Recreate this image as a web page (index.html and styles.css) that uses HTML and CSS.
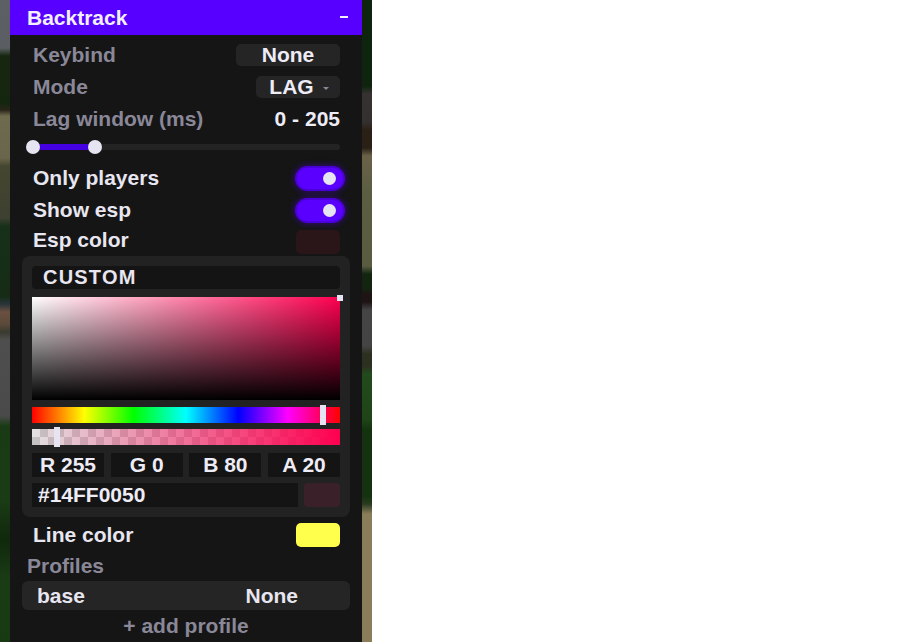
FILE: index.html
```html
<!DOCTYPE html>
<html lang="en">
<head>
  <meta charset="UTF-8" />
  <title>Backtrack</title>
  <link rel="stylesheet" href="styles.css">
</head>
<body>
  <div class="scene">
    <div class="module">
      <div class="module-head">
        <span class="module-title">Backtrack</span>
        <span class="collapse"></span>
      </div>

      <div class="module-body">
        <div class="row">
          <span class="label muted">Keybind</span>
          <span class="pill bind">None</span>
        </div>
        <div class="row">
          <span class="label muted">Mode</span>
          <span class="pill mode">LAG <span class="caret"></span></span>
        </div>
        <div class="row">
          <span class="label muted">Lag window (ms)</span>
          <span class="value">0 - 205</span>
        </div>
        <div class="slider-row">
          <div class="slider">
            <div class="slider-fill"></div>
            <span class="thumb thumb-min"></span>
            <span class="thumb thumb-max"></span>
          </div>
        </div>
        <div class="row">
          <span class="label">Only players</span>
          <span class="toggle on"><span class="knob"></span></span>
        </div>
        <div class="row">
          <span class="label">Show esp</span>
          <span class="toggle on"><span class="knob"></span></span>
        </div>
        <div class="row row-short">
          <span class="label">Esp color</span>
          <span class="swatch esp"></span>
        </div>

        <div class="picker">
          <div class="picker-mode">CUSTOM</div>
          <div class="sv-box"><span class="sv-dot"></span></div>
          <div class="hue-bar"><span class="bar-mark hue-mark"></span></div>
          <div class="alpha-bar"><span class="bar-mark alpha-mark"></span></div>
          <div class="channels">
            <span class="channel">R 255</span>
            <span class="channel">G 0</span>
            <span class="channel">B 80</span>
            <span class="channel">A 20</span>
          </div>
          <div class="hex-row">
            <span class="hex-input">#14FF0050</span>
            <span class="hex-preview"></span>
          </div>
        </div>

        <div class="row row-after">
          <span class="label">Line color</span>
          <span class="swatch line"></span>
        </div>

        <div class="section-title">Profiles</div>
        <div class="profile">
          <span class="profile-name">base</span>
          <span class="profile-bind">None</span>
        </div>
        <div class="add-profile">+ add profile</div>
      </div>
    </div>
  </div>
</body>
</html>
```

FILE: styles.css
```css
body {
  margin: 0;
  background: #fff;
  font-family: "Liberation Sans", Arial, sans-serif;
  font-weight: bold;
}

/* blurred game world behind the click gui */
.scene {
  width: 372px;
  height: 642px;
  overflow: hidden;
  background:
    linear-gradient(to bottom,
      #5c6064 0, #5a5e62 48px, #16260f 56px, #15260f 104px, #2a2418 110px,
      #6e6a4e 116px, #6a664c 158px, #45462f 166px, #3e4030 218px,
      #17301a 226px, #152b14 296px, #28343a 304px, #6a5040 312px,
      #5c4a3a 324px, #3a3a30 332px, #4e4e4e 340px, #4a4a4a 416px,
      #193a14 426px, #1a3c15 500px, #10280c 540px, #1a3c15 580px, #183a13 642px)
      left top / 10px 100% no-repeat,
    linear-gradient(to bottom,
      #0f240e 0, #0f240e 86px, #363232 94px, #343030 122px, #2a2016 130px,
      #2a2016 148px, #6a6248 156px, #5c5e44 190px, #5a5c42 266px,
      #12260f 274px, #12260f 288px, #1e1414 294px, #1e1414 302px,
      #454545 310px, #444 346px, #2c3020 354px, #2c3020 366px,
      #234a1c 374px, #1e4418 420px, #14320f 430px, #14320f 496px,
      #2a3a20 504px, #8a7e5a 514px, #8a7e5a 642px)
      right top / 10px 100% no-repeat;
}

.module {
  width: 352px;
  height: 642px;
  margin-left: 10px;
  background: #151515;
}

.module-head {
  height: 35px;
  background: #5800ff;
  display: flex;
  align-items: center;
  justify-content: space-between;
  padding: 0 14px 0 17px;
  color: #f2f0ff;
  font-size: 21px;
}

.collapse {
  width: 8px;
  height: 2px;
  background: #f2f0ff;
  margin-top: -2px;
}

.module-body {
  padding: 4px 12px 0;
}

.row {
  height: 32px;
  display: flex;
  align-items: center;
  justify-content: space-between;
  padding: 0 10px 0 11px;
}

.row-short {
  height: 30px;
  align-items: flex-start;
  padding-top: 4px;
  box-sizing: border-box;
}

.row-short .label {
  margin-top: -2px;
}

.row-after {
  margin-top: 2px;
}

.label {
  font-size: 21px;
  color: #e8e6f0;
}

.muted {
  color: #8a8898;
}

.value {
  font-size: 21px;
  color: #eeecf6;
}

.pill {
  height: 22px;
  border-radius: 5px;
  background: #252525;
  color: #eeecf6;
  font-size: 21px;
  display: flex;
  align-items: center;
  justify-content: center;
}

.bind {
  width: 104px;
}

.mode {
  width: 84px;
  gap: 9px;
  padding-left: 2px;
  box-sizing: border-box;
}

.caret {
  width: 0;
  height: 0;
  border-left: 3px solid transparent;
  border-right: 3px solid transparent;
  border-top: 3px solid #8a8898;
  margin-top: 2px;
}

.slider-row {
  height: 24px;
  margin-bottom: 3px;
  display: flex;
  align-items: center;
  padding: 0 10px 0 11px;
}

.slider {
  position: relative;
  flex: 1;
  height: 6px;
  border-radius: 3px;
  background: #232323;
}

.slider-fill {
  width: 62px;
  height: 6px;
  background: #4400e0;
}

.thumb {
  position: absolute;
  top: -4px;
  width: 14px;
  height: 14px;
  border-radius: 50%;
  background: #e6e4f0;
}

.thumb-min { left: -7px; }
.thumb-max { left: 55px; }

.toggle {
  width: 46px;
  height: 21px;
  border-radius: 11px;
  margin-right: -3px;
  background: #5a00ff;
  box-shadow: 0 0 0 2px #4a00d8, 0 0 5px 4px rgba(70, 0, 200, 0.4);
  display: flex;
  align-items: center;
  justify-content: flex-end;
  padding-right: 7px;
  box-sizing: border-box;
}

.knob {
  width: 13px;
  height: 13px;
  border-radius: 50%;
  background: #e6e4f0;
}

.swatch {
  width: 44px;
  height: 24px;
  border-radius: 5px;
}

.esp { background: #2a1519; }
.line { background: #ffff4c; }

/* color picker */
.picker {
  background: #222;
  border-radius: 8px;
  padding: 10px;
  display: flex;
  flex-direction: column;
}

.picker-mode {
  height: 23px;
  border-radius: 4px;
  background: #141414;
  color: #e8e6f0;
  font-size: 20px;
  letter-spacing: 1.2px;
  line-height: 23px;
  padding-left: 11px;
  margin-bottom: 8px;
}

.sv-box {
  position: relative;
  height: 103px;
  background:
    linear-gradient(to top, #000, rgba(0, 0, 0, 0)),
    linear-gradient(to right, #fff, #ff0050);
  margin-bottom: 7px;
}

.sv-dot {
  position: absolute;
  right: -3px;
  top: -2px;
  width: 6px;
  height: 6px;
  background: #e6e4f0;
}

.hue-bar {
  position: relative;
  height: 16px;
  background: linear-gradient(to right, #f00, #ff0 17%, #0f0 33%, #0ff 50%, #00f 67%, #f0f 83%, #f00);
  margin-bottom: 6px;
}

.alpha-bar {
  position: relative;
  height: 16px;
  background:
    linear-gradient(to right, rgba(255, 0, 80, 0), #ff0050),
    conic-gradient(#c4c4c4 25%, #e2e2e2 0 50%, #c4c4c4 0 75%, #e2e2e2 0) 0 0 / 16px 16px;
  margin-bottom: 8px;
}

.bar-mark {
  position: absolute;
  top: -2px;
  width: 6px;
  height: 20px;
  background: #e6e4f0;
}

.hue-mark { left: 288px; }
.alpha-mark { left: 22px; }

.channels {
  display: flex;
  justify-content: space-between;
  margin-bottom: 6px;
}

.channel {
  width: 72px;
  height: 24px;
  background: #141414;
  color: #eeecf6;
  font-size: 21px;
  display: flex;
  align-items: center;
  justify-content: center;
}

.hex-row {
  display: flex;
  gap: 6px;
}

.hex-input {
  flex: 1;
  height: 24px;
  background: #141414;
  color: #eeecf6;
  font-size: 21px;
  line-height: 24px;
  padding-left: 6px;
}

.hex-preview {
  width: 36px;
  height: 24px;
  border-radius: 4px;
  background: #3a2028;
}

.section-title {
  height: 28px;
  line-height: 30px;
  padding-left: 5px;
  font-size: 21px;
  color: #8a8898;
}

.profile {
  height: 29px;
  margin-top: 2px;
  border-radius: 6px;
  background: #252525;
  display: flex;
  align-items: center;
  font-size: 21px;
  color: #e8e6f0;
}

.profile-name {
  flex: 1;
  padding-left: 15px;
}

.profile-bind {
  flex: 1;
  text-align: center;
}

.add-profile {
  height: 31px;
  line-height: 31px;
  text-align: center;
  font-size: 21px;
  color: #8a8898;
}
```
